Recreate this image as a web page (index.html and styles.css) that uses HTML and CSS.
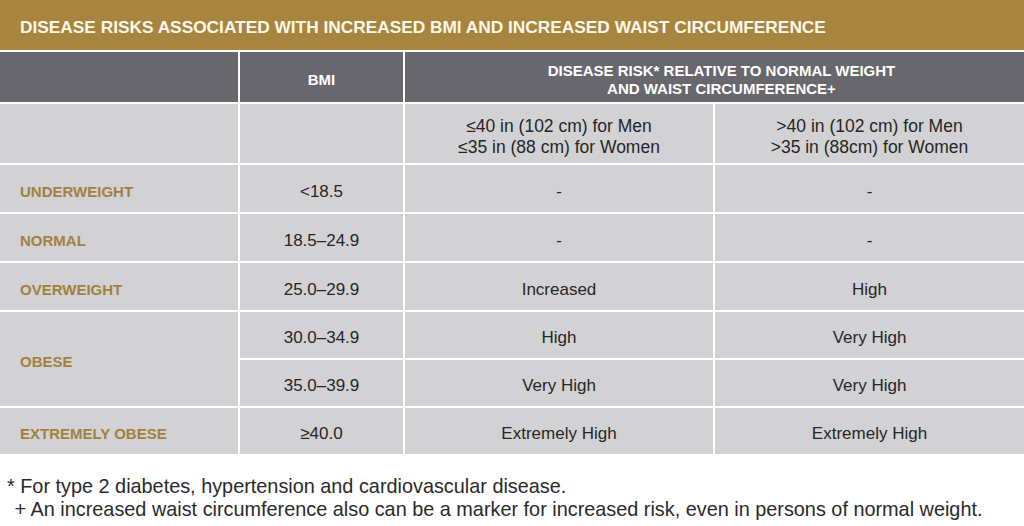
FILE: index.html
```html
<!DOCTYPE html>
<html>
<head>
<meta charset="utf-8">
<link rel="stylesheet" href="styles.css">
</head>
<body>
<div class="page">
  <div class="title">DISEASE RISKS ASSOCIATED WITH INCREASED BMI AND INCREASED WAIST CIRCUMFERENCE</div>
  <div class="table">
    <div class="cell head"></div>
    <div class="cell head">BMI</div>
    <div class="cell head span2">DISEASE RISK* RELATIVE TO NORMAL WEIGHT<br>AND WAIST CIRCUMFERENCE+</div>

    <div class="cell"></div>
    <div class="cell"></div>
    <div class="cell sub">≤40 in (102 cm) for Men<br>≤35 in (88 cm) for Women</div>
    <div class="cell sub">&gt;40 in (102 cm) for Men<br>&gt;35 in (88cm) for Women</div>

    <div class="cell label">UNDERWEIGHT</div>
    <div class="cell">&lt;18.5</div>
    <div class="cell">-</div>
    <div class="cell">-</div>

    <div class="cell label">NORMAL</div>
    <div class="cell">18.5–24.9</div>
    <div class="cell">-</div>
    <div class="cell">-</div>

    <div class="cell label">OVERWEIGHT</div>
    <div class="cell">25.0–29.9</div>
    <div class="cell">Increased</div>
    <div class="cell">High</div>

    <div class="cell label rspan2">OBESE</div>
    <div class="cell">30.0–34.9</div>
    <div class="cell">High</div>
    <div class="cell">Very High</div>

    <div class="cell">35.0–39.9</div>
    <div class="cell">Very High</div>
    <div class="cell">Very High</div>

    <div class="cell label">EXTREMELY OBESE</div>
    <div class="cell">≥40.0</div>
    <div class="cell">Extremely High</div>
    <div class="cell">Extremely High</div>
  </div>
  <div class="notes">
    <p class="note">* For type 2 diabetes, hypertension and cardiovascular disease.</p>
    <p class="note note2">+ An increased waist circumference also can be a marker for increased risk, even in persons of normal weight.</p>
  </div>
</div>
</body>
</html>
```

FILE: styles.css
```css
html, body {
  margin: 0;
  padding: 0;
  background: #ffffff;
}
.page {
  width: 1024px;
  height: 526px;
  overflow: hidden;
  font-family: "Liberation Sans", Arial, sans-serif;
  color: #262626;
}
.title {
  height: 50px;
  background: #a8853e;
  color: #fdf7ea;
  font-weight: bold;
  font-size: 17.3px;
  display: flex;
  align-items: center;
  padding-left: 20px;
  padding-top: 4px;
  box-sizing: border-box;
}
.table {
  margin-top: 2px;
  display: grid;
  grid-template-columns: 238px 163px 308px 309px;
  grid-template-rows: 50px 59px 47px 47px 47px 46px 46px 46px;
  gap: 2px;
  background: #ffffff;
}
.cell {
  background: #d2d2d4;
  display: flex;
  align-items: center;
  justify-content: center;
  text-align: center;
  font-size: 17px;
  line-height: 21px;
  color: #262626;
  padding-top: 5px;
  box-sizing: border-box;
}
.head {
  background: #68676d;
  color: #ffffff;
  font-weight: bold;
  font-size: 15px;
  line-height: 18px;
  padding-top: 6px;
}
.span2 {
  grid-column: span 2;
  padding-left: 14px;
}
.sub {
  font-size: 17.5px;
  padding-top: 7px;
}
.label {
  justify-content: flex-start;
  padding-left: 20px;
  font-weight: bold;
  font-size: 15px;
  color: #a2813f;
}
.rspan2 {
  grid-row: span 2;
}
.notes {
  padding-top: 20px;
  padding-left: 7px;
}
.note {
  margin: 0;
  font-family: "Liberation Sans", Arial, sans-serif;
  font-size: 21px;
  line-height: 23px;
  color: #2a2a2a;
  white-space: nowrap;
  transform: scaleX(0.945);
  transform-origin: left center;
}
.note2 {
  padding-left: 8px;
}
```
